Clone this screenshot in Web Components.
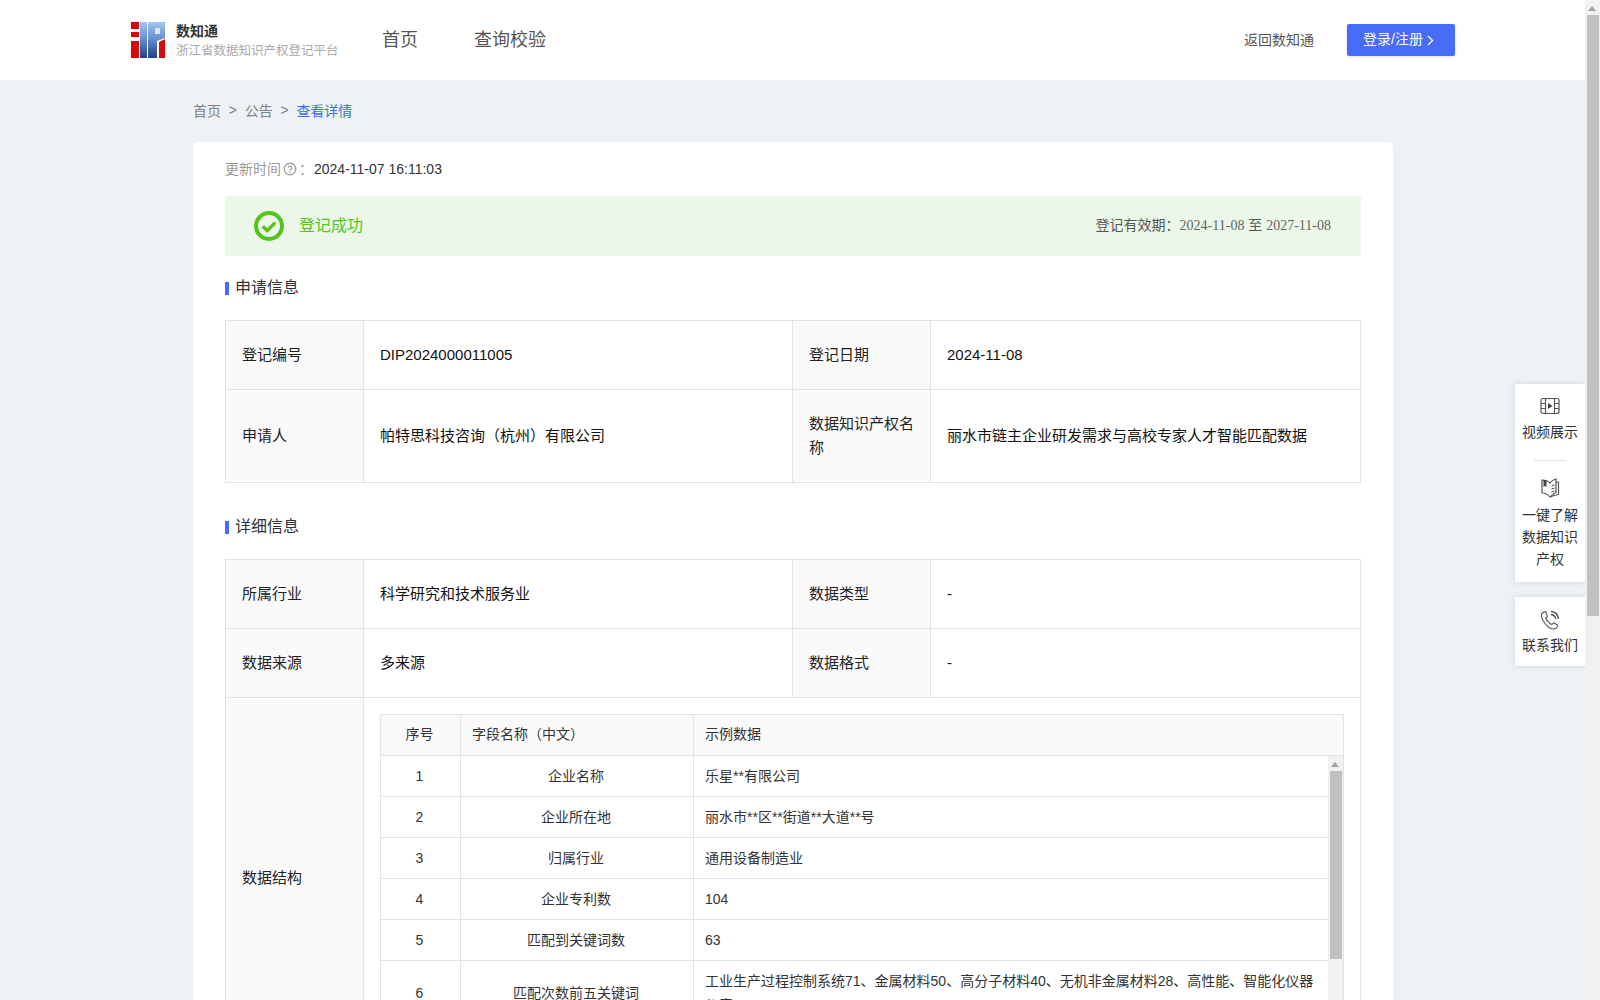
<!DOCTYPE html>
<html lang="zh">
<head>
<meta charset="utf-8">
<title>查看详情</title>
<style>
html, body { margin: 0; height: 100%; overflow: hidden; }
body {
  font-family: "Liberation Sans", "Noto Sans CJK SC", sans-serif;
  font-size: 14px;
  color: #333;
  background: #eef2f5;
}
</style>
</head>
<body>
<app-shell>
  <site-header></site-header>
  <bread-crumb></bread-crumb>
  <detail-card>
    <update-time>2024-11-07 16:11:03</update-time>
    <status-banner from="2024-11-08" to="2027-11-08">登记成功</status-banner>

    <section-title top="22" bottom="26">申请信息</section-title>
    <info-table>
      <info-row>
        <info-cell head>登记编号</info-cell><info-cell>DIP2024000011005</info-cell>
        <info-cell head>登记日期</info-cell><info-cell>2024-11-08</info-cell>
      </info-row>
      <info-row>
        <info-cell head>申请人</info-cell><info-cell>帕特思科技咨询（杭州）有限公司</info-cell>
        <info-cell head>数据知识产权名称</info-cell><info-cell>丽水市链主企业研发需求与高校专家人才智能匹配数据</info-cell>
      </info-row>
    </info-table>

    <section-title top="34" bottom="26">详细信息</section-title>
    <info-table>
      <info-row>
        <info-cell head>所属行业</info-cell><info-cell>科学研究和技术服务业</info-cell>
        <info-cell head>数据类型</info-cell><info-cell>-</info-cell>
      </info-row>
      <info-row>
        <info-cell head>数据来源</info-cell><info-cell>多来源</info-cell>
        <info-cell head>数据格式</info-cell><info-cell>-</info-cell>
      </info-row>
      <info-row wide>
        <info-cell head>数据结构</info-cell>
        <info-cell flush>
          <field-table></field-table>
        </info-cell>
      </info-row>
    </info-table>
  </detail-card>
  <side-tools></side-tools>
</app-shell>

<script>
// shared scrollbar, used for the page and for the inner table
class FakeScrollbar extends HTMLElement {
  constructor() {
    super();
    this.attachShadow({ mode: 'open' });
    this.shadowRoot.innerHTML = `
<style>
:host { display: block; position: relative; flex: none; background: #f1f1f1; width: 15px; }
.arrow { position: absolute; top: 6px; left: 3px; width: 0; height: 0;
  border: 4.5px solid transparent; border-top: 0; border-bottom: 5px solid #a3a3a3; }
.thumb { position: absolute; left: 2px; right: 1px; background: #c1c1c1; }
</style>
<div class="arrow"></div>
<div class="thumb"></div>`;
  }
  connectedCallback() {
    const t = this.shadowRoot.querySelector('.thumb');
    t.style.top = this.getAttribute('thumb-top') + 'px';
    t.style.height = this.getAttribute('thumb-height') + 'px';
  }
}
customElements.define('fake-scrollbar', FakeScrollbar);

class AppShell extends HTMLElement {
  constructor() {
    super();
    this.attachShadow({ mode: 'open' });
    this.shadowRoot.innerHTML = `
<style>
:host { display: flex; height: 100vh; overflow: hidden; position: relative; }
main { flex: 1; min-width: 0; height: 100%; overflow: hidden; position: relative; }
</style>
<main><slot></slot></main>
<fake-scrollbar thumb-top="15" thumb-height="601"></fake-scrollbar>`;
  }
}
customElements.define('app-shell', AppShell);

class SiteHeader extends HTMLElement {
  constructor() {
    super();
    this.attachShadow({ mode: 'open' });
    this.shadowRoot.innerHTML = `
<style>
:host { display: flex; align-items: center; height: 80px; padding: 0 130px 0 131px; background: #fff; }
.logo { display: block; width: 35px; height: 36px; flex: none; }
.brand { margin-left: 10px; width: 206px; flex: none; }
.name { font-size: 14px; font-weight: 700; line-height: 20px; color: #333; }
.sub { font-size: 12.5px; line-height: 18px; color: #aaa; white-space: nowrap; margin-top: 1px; }
nav { display: flex; gap: 56px; font-size: 18px; color: #555; margin-bottom: 4px; }
.right { margin-left: auto; display: flex; align-items: center; }
.back { color: #555; font-size: 14px; margin: 0 33px 2px 0; }
.login { display: flex; align-items: center; gap: 3px; box-sizing: border-box; width: 108px; height: 32px; padding-left: 16px;
  background: #476cf5; color: #fff; font-size: 14px; border-radius: 2px; box-shadow: 0 1px 3px rgba(71,108,245,.2); }
.login span { margin-bottom: 4px; }
</style>
<svg class="logo" viewBox="0 0 35 36">
  <defs><linearGradient id="lg" x1="0" y1="0" x2="0" y2="1">
    <stop offset="0" stop-color="#a6c6ec"/><stop offset=".45" stop-color="#6593d2"/><stop offset="1" stop-color="#22407f"/>
  </linearGradient></defs>
  <rect x="0" y="0" width="8" height="7" fill="#d40a0c"/>
  <rect x="0" y="10" width="8" height="5" fill="#d40a0c"/>
  <rect x="0" y="19" width="8" height="17" fill="#d40a0c"/>
  <rect x="9" y="0" width="7" height="36" fill="url(#lg)"/>
  <path d="M17 0H34V16L26 19V36H17Z" fill="url(#lg)"/>
  <rect x="24" y="6" width="5" height="6" fill="#dbe7f6"/>
  <path d="M28 20L34 17V36H28Z" fill="#d40a0c"/>
</svg>
<div class="brand">
  <div class="name">数知通</div>
  <div class="sub">浙江省数据知识产权登记平台</div>
</div>
<nav><span>首页</span><span>查询校验</span></nav>
<div class="right">
  <span class="back">返回数知通</span>
  <div class="login"><span>登录/注册</span>
    <svg width="8" height="11" viewBox="0 0 8 11" fill="none" stroke="#fff" stroke-width="1.300"><path d="M2 1l4.500 4.500L2 10"/></svg>
  </div>
</div>`;
  }
}
customElements.define('site-header', SiteHeader);

class BreadCrumb extends HTMLElement {
  constructor() {
    super();
    this.attachShadow({ mode: 'open' });
    this.shadowRoot.innerHTML = `
<style>
:host { display: flex; align-items: center; gap: 7.75px; height: 59px; padding-bottom: 3px; margin-left: 193px; font-size: 14px; color: #808080; }
.now { color: #3a6df0; }
</style>
<span>首页</span><span>&gt;</span><span>公告</span><span>&gt;</span><span class="now">查看详情</span>`;
  }
}
customElements.define('bread-crumb', BreadCrumb);

class DetailCard extends HTMLElement {
  constructor() {
    super();
    this.attachShadow({ mode: 'open' });
    this.shadowRoot.innerHTML = `
<style>
:host { display: block; width: 1136px; margin-left: 193px; padding: 16px 32px 32px; background: #fff; border-radius: 4px; }
</style>
<slot></slot>`;
  }
}
customElements.define('detail-card', DetailCard);

class UpdateTime extends HTMLElement {
  constructor() {
    super();
    this.attachShadow({ mode: 'open' });
    this.shadowRoot.innerHTML = `
<style>
:host { display: flex; align-items: center; height: 22px; font-size: 14px; color: #333; margin-bottom: 16px; }
.lbl { color: #999; margin-bottom: 3px; }
svg { margin: 0 2px; }
.colon { color: #999; width: 15px; margin-bottom: 3px; }
</style>
<span class="lbl">更新时间</span>
<svg width="14" height="14" viewBox="0 0 14 14" fill="none" stroke="#999">
  <circle cx="7" cy="7" r="5.800" stroke-width="1.300"/>
  <path d="M5.200 5.600a1.800 1.800 0 1 1 2.700 1.500c-.6.4-.9.7-.9 1.400" stroke-width="1.100"/>
  <circle cx="7" cy="10.300" r=".8" fill="#999" stroke="none"/>
</svg>
<span class="colon">：</span><slot></slot>`;
  }
}
customElements.define('update-time', UpdateTime);

class StatusBanner extends HTMLElement {
  constructor() {
    super();
    this.attachShadow({ mode: 'open' });
    this.shadowRoot.innerHTML = `
<style>
:host { display: flex; align-items: center; height: 60px; padding: 0 30px 0 29px; background: #ebf7e8; }
svg { flex: none; margin-right: 15px; }
.ok { font-size: 16px; color: #52c41a; margin-bottom: 4px; }
.term { margin: 0 0 5px auto; font-size: 14px; color: #555; }
.term b { font-weight: 400; font-family: "Liberation Serif", serif; color: #666; }
</style>
<svg width="30" height="30" viewBox="0 0 30 30" fill="none" stroke="#52c41a">
  <circle cx="15" cy="15" r="13" stroke-width="4"/>
  <path d="M8.800 15.200l4.400 4.400 8-8" stroke-width="3.400"/>
</svg>
<span class="ok"><slot></slot></span>
<span class="term">登记有效期：<b class="a"></b> 至 <b class="b"></b></span>`;
  }
  connectedCallback() {
    this.shadowRoot.querySelector('.a').textContent = this.getAttribute('from');
    this.shadowRoot.querySelector('.b').textContent = this.getAttribute('to');
  }
}
customElements.define('status-banner', StatusBanner);

class SectionTitle extends HTMLElement {
  constructor() {
    super();
    this.attachShadow({ mode: 'open' });
    this.shadowRoot.innerHTML = `
<style>
:host { display: flex; align-items: center; height: 16px; font-size: 16px; color: #333; }
i { width: 4px; height: 13px; margin: 4px 6px 0 0; background: #476cf5; }
</style>
<i></i><slot></slot>`;
  }
  connectedCallback() {
    this.style.marginTop = this.getAttribute('top') + 'px';
    this.style.marginBottom = this.getAttribute('bottom') + 'px';
  }
}
customElements.define('section-title', SectionTitle);

class InfoTable extends HTMLElement {
  constructor() {
    super();
    this.attachShadow({ mode: 'open' });
    this.shadowRoot.innerHTML = `
<style>
:host { display: block; border: solid #e3e3e3; border-width: 1px 1px 0 0; }
</style>
<slot></slot>`;
  }
}
customElements.define('info-table', InfoTable);

class InfoRow extends HTMLElement {
  constructor() {
    super();
    this.attachShadow({ mode: 'open' });
    this.shadowRoot.innerHTML = `
<style>
:host { display: grid; grid-template-columns: 138px 429px 138px 1fr; border-bottom: 1px solid #e3e3e3; }
:host([wide]) { grid-template-columns: 138px 1fr; }
:host([wide]) ::slotted([head]) { padding-bottom: 24px; }
</style>
<slot></slot>`;
  }
}
customElements.define('info-row', InfoRow);

class InfoCell extends HTMLElement {
  constructor() {
    super();
    this.attachShadow({ mode: 'open' });
    this.shadowRoot.innerHTML = `
<style>
:host { display: flex; align-items: center; min-width: 0; padding: 22px 15px 22px 16px; line-height: 24px;
  font-size: 15px; color: #111; border-left: 1px solid #e3e3e3; }
:host([head]) { background: #fafafa; color: #222; }
:host([flush]) { display: block; padding: 16px; }
</style>
<slot></slot>`;
  }
}
customElements.define('info-cell', InfoCell);

const FIELDS = [
  ['企业名称', '乐星**有限公司'],
  ['企业所在地', '丽水市**区**街道**大道**号'],
  ['归属行业', '通用设备制造业'],
  ['企业专利数', '104'],
  ['匹配到关键词数', '63'],
  ['匹配次数前五关键词', '工业生产过程控制系统71、金属材料50、高分子材料40、无机非金属材料28、高性能、智能化仪器仪表15']
];

class FieldTable extends HTMLElement {
  constructor() {
    super();
    this.attachShadow({ mode: 'open' });
    const rows = FIELDS.map((f, i) => `
      <div class="row">
        <div class="c n">${i + 1}</div>
        <div class="c f">${f[0]}</div>
        <div class="c v">${f[1]}</div>
      </div>`).join('');
    this.shadowRoot.innerHTML = `
<style>
:host { display: block; border: 1px solid #e3e3e3; border-bottom: 0; font-size: 14px; color: #333; line-height: 24px; }
.row { display: grid; grid-template-columns: 79px 233px 1fr; border-bottom: 1px solid #e3e3e3; min-height: 40px; }
.head { background: #fafafa; }
.c { display: flex; align-items: center; padding: 8px 12px; min-width: 0; border-left: 1px solid #e3e3e3; }
.c:first-child { border-left: 0; }
.n { justify-content: center; padding-right: 13px; padding-left: 11px; }
.f { justify-content: center; text-align: center; padding-right: 13px; padding-left: 11px; }
.v { padding-left: 11px; }
.head .c { padding-top: 7px; padding-bottom: 9px; }
.head .f { justify-content: flex-start; }
.body { display: flex; height: 288px; overflow: hidden; }
.rows { flex: 1; min-width: 0; }
</style>
<div class="row head">
  <div class="c n">序号</div><div class="c f">字段名称（中文）</div><div class="c v">示例数据</div>
</div>
<div class="body">
  <div class="rows">${rows}</div>
  <fake-scrollbar thumb-top="15" thumb-height="188"></fake-scrollbar>
</div>`;
  }
}
customElements.define('field-table', FieldTable);

class SideTools extends HTMLElement {
  constructor() {
    super();
    this.attachShadow({ mode: 'open' });
    this.shadowRoot.innerHTML = `
<style>
:host { position: absolute; top: 384px; right: 0; width: 70px; display: flex; flex-direction: column; gap: 15px;
  font-size: 14px; line-height: 22px; color: #333; text-align: center; }
.panel { background: #fff; box-shadow: 0 0 6px rgba(120,135,160,.28); padding: 12px 0 10px; }
.panel.first { padding-bottom: 12px; }
.tool { display: flex; flex-direction: column; align-items: center; }
.tool svg { display: block; margin-bottom: 3px; }
.panel.first svg { margin-bottom: 5px; }
hr { width: 32px; height: 1px; border: 0; margin: 17px auto 16px; background: #e3e3e3; }
.panel.first .tool:last-child { padding: 0 4px; }
</style>
<div class="panel first">
  <div class="tool">
    <svg width="22" height="20" viewBox="0 0 22 20" fill="none" stroke="#555" stroke-width="1.200">
      <rect x="2" y="2.500" width="18" height="15" rx="2"/>
      <path d="M6.500 2.500v15M15.500 2.500v15M2 7.500h4.500M2 12.500h4.500M15.500 7.500H20M15.500 12.500H20"/>
      <path d="M9 7l4.500 3L9 13z" fill="#444" stroke="none"/>
    </svg>
    <span>视频展示</span>
  </div>
  <hr>
  <div class="tool">
    <svg width="22" height="22" viewBox="0 0 22 22" fill="none" stroke="#555" stroke-width="1.200">
      <path d="M11 6C9 4 6 3 3 3v13c3 0 6 1.500 8 4 2-2.500 4-3.500 6-4.500V2c-2.500 .5-4.500 2-6 4z"/>
      <path d="M17 5h2.500v12.500C17 18 13.500 19 11 20"/>
      <path d="M4.500 3h3v7l-1.500-1-1.500 1z" fill="#444" stroke="none"/>
      <path d="M12.500 9l3-1M12.500 12l3-1M12.500 15l3-1"/>
    </svg>
    <span>一键了解数据知识产权</span>
  </div>
</div>
<div class="panel">
  <div class="tool">
    <svg width="22" height="22" viewBox="0 0 22 22" fill="none" stroke="#555" stroke-width="1.100">
      <path d="M6.500 2.500L4 3.500C2 5 2 8 4 11.500c2.500 4.500 6.500 8 10 8.500 2 .2 3.500-.8 4.500-2.500.3-.7 0-1.300-.5-1.700l-2.500-1.600c-.6-.4-1.300-.3-1.800.3l-.9 1c-2.300-.8-5.300-4-6-6.500l1-.8c.6-.5.7-1.200.4-1.800L6.500 2.500z"/>
      <path d="M12 2.500c4 .3 7 3.300 7.500 7.500M12 5.500c2.500.3 4.300 2 4.700 4.500" stroke-width="1.400"/>
    </svg>
    <span>联系我们</span>
  </div>
</div>`;
  }
}
customElements.define('side-tools', SideTools);
</script>
</body>
</html>
